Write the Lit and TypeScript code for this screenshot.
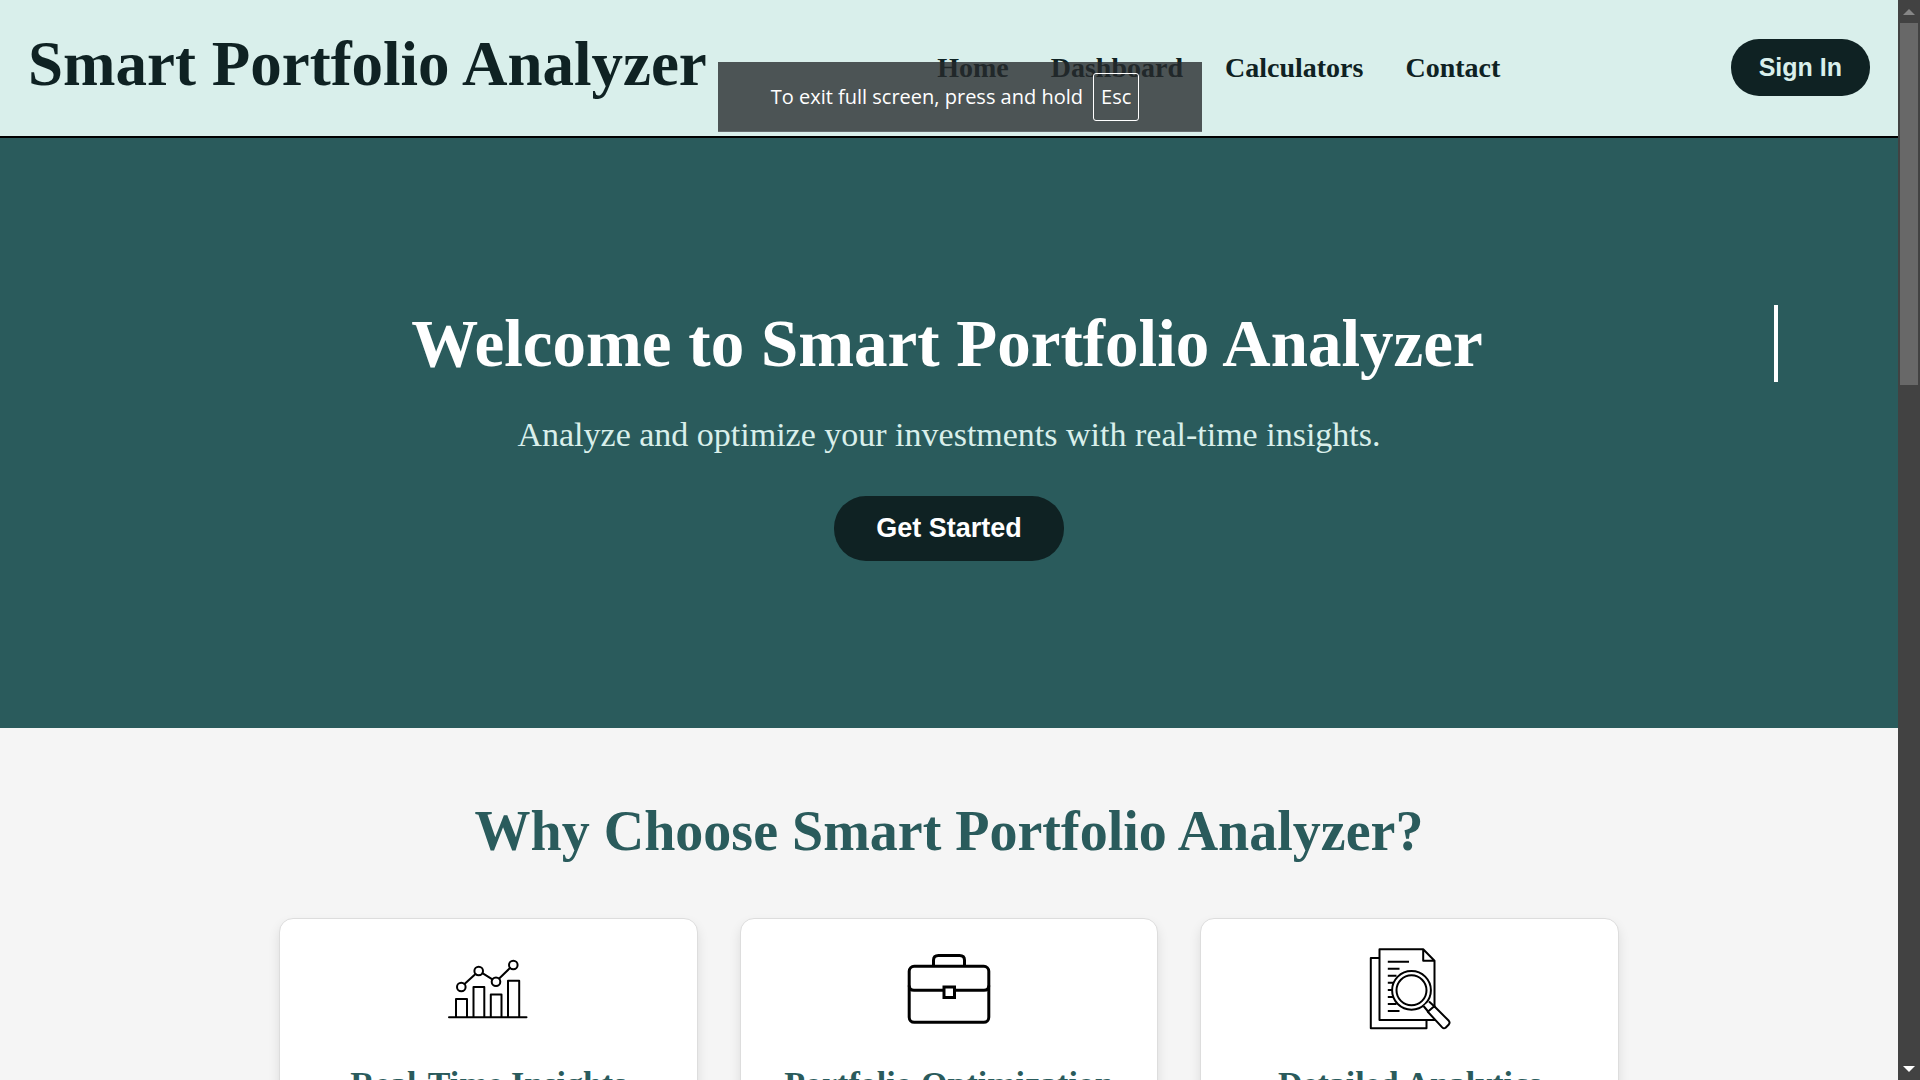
import { LitElement, html, css, svg } from "lit";
import { customElement } from "lit/decorators.js";

const chartIcon = svg`
  <g fill="none" stroke="#000" stroke-width="2" stroke-linecap="round" stroke-linejoin="round">
    <path d="M3 70.3H80.5M10 70V52H21V70M27.5 70V40H38.3V70M44.8 70V47.5H55.5V70M62 70V33.8H73.2V70"/>
    <path d="M18.5 37L29.5 27M36.4 26.2L46.4 32.4M53.2 31.5L64 21"/>
    <circle cx="15.3" cy="40" r="4.3"/>
    <circle cx="32.7" cy="24" r="4.3"/>
    <circle cx="50" cy="34.7" r="4.3"/>
    <circle cx="67.3" cy="18" r="4.3"/>
  </g>`;

const briefcaseIcon = svg`
  <g fill="none" stroke="#000" stroke-width="3">
    <rect x="2.2" y="19.3" width="79.6" height="56" rx="5"/>
    <path d="M26.5 19V13.3Q26.5 8.5 31.5 8.5H52.5Q57.5 8.5 57.5 13.3V19"/>
    <path d="M2.2 38.5Q2.2 43.3 7 43.3H77Q81.8 43.3 81.8 38.5"/>
    <rect x="37" y="40" width="10.5" height="10.5" fill="#fff"/>
  </g>`;

const documentIcon = svg`
  <g fill="none" stroke="#000" stroke-width="2" stroke-linejoin="round">
    <path d="M11.5 11H2.8V81.3H58.5V73"/>
    <path d="M66.5 60V13.7L55.2 2.3H11.5V73H67M55.2 2.3V13.7H66.5"/>
    <path d="M19.8 14.7H41M19.8 21.7H31.5M19.8 28.7H28.5M19.8 35.7H26M19.8 43H25M19.8 50H26M19.8 57H28.5M19.8 64H31.5"/>
    <circle cx="43.5" cy="43.3" r="19.4" fill="#fff"/>
    <circle cx="43.5" cy="43.3" r="15"/>
    <path d="M55.5 59L60.5 65L66.5 59.5L61 54.5" fill="#fff"/>
    <path d="M59.8 64.8L66.3 59.2L80.8 73.8Q82.3 75.6 80.8 77.5L77.6 80.7Q75.8 82 74.2 80.4Z" fill="#fff"/>
  </g>`;

const features = [
  { title: "Real-Time Insights", icon: chartIcon },
  { title: "Portfolio Optimization", icon: briefcaseIcon },
  { title: "Detailed Analytics", icon: documentIcon },
];

const links = ["Home", "Dashboard", "Calculators", "Contact"];

@customElement("app-root")
export class AppRoot extends LitElement {
  static styles = css`
    :host {
      display: flex;
      height: 100vh;
      overflow: hidden;
      position: relative;
      font-family: "Liberation Serif", "Times New Roman", serif;
      background: #f5f5f5;
    }
    * {
      box-sizing: border-box;
    }
    h1, h2, h3, p {
      margin: 0;
    }
    .page {
      flex: 1;
      min-width: 0;
    }
    .header {
      display: flex;
      align-items: center;
      justify-content: space-between;
      padding: 28px 28px 29px;
      background: #d9efeb;
      border-bottom: 2px solid #000;
      color: #0f2223;
    }
    .brand {
      font-size: 63px;
      line-height: 72px;
      padding-bottom: 7px;
    }
    .nav {
      display: flex;
      gap: 42px;
    }
    .link {
      font-size: 28px;
      line-height: 32px;
      font-weight: bold;
      color: inherit;
      text-decoration: none;
    }
    .button {
      border: 0;
      font-family: "Liberation Sans", Arial, sans-serif;
      font-weight: bold;
      background: #0f2223;
      cursor: pointer;
    }
    .sign-in {
      padding: 14px 28px;
      border-radius: 28px;
      font-size: 25px;
      line-height: 29px;
      color: #d9efeb;
    }
    .hero {
      display: flex;
      flex-direction: column;
      align-items: center;
      padding: 167px 120px;
      background: #2a5b5c;
      text-align: center;
    }
    .welcome {
      align-self: stretch;
      border-right: 4px solid #fff;
      font-size: 67px;
      line-height: 77px;
      color: #fff;
    }
    .tagline {
      margin: 34px 0 42px;
      font-size: 34px;
      line-height: 38px;
      color: #d9efeb;
    }
    .start {
      padding: 17px 42px;
      border-radius: 32px;
      font-size: 27px;
      line-height: 31px;
      color: #fff;
    }
    .features {
      padding: 71px 28px;
      color: #2a5b5c;
      text-align: center;
    }
    .heading {
      font-size: 56px;
      line-height: 64px;
    }
    .cards {
      display: grid;
      grid-template-columns: repeat(3, 1fr);
      gap: 42px;
      max-width: 1340px;
      margin: 55px auto 0;
    }
    .card {
      display: flex;
      flex-direction: column;
      align-items: center;
      gap: 34px;
      padding: 28px;
      background: #fff;
      border: 1px solid #ddd;
      border-radius: 14px;
      box-shadow: 0 6px 12px rgba(0, 0, 0, 0.1);
    }
    .icon {
      width: 84px;
      height: 84px;
    }
    .card-title {
      font-size: 34px;
      line-height: 38px;
      white-space: nowrap;
    }
    .scrollbar {
      display: flex;
      flex-direction: column;
      align-items: center;
      width: 22px;
      background: #424242;
    }
    .arrow {
      display: block;
      width: 12px;
      height: 23px;
    }
    .track {
      flex: 1;
      width: 18px;
    }
    .thumb {
      height: 35%;
      background: #686868;
    }
    .notice {
      position: absolute;
      top: 62px;
      left: 50%;
      transform: translateX(-50%);
      display: flex;
      align-items: center;
      justify-content: center;
      gap: 10px;
      width: 484px;
      height: 70px;
      padding-right: 10px;
      background: rgba(38, 42, 45, 0.79);
      border-bottom: 1px solid rgba(120, 124, 126, 0.6);
      font-family: "Open Sans", "Noto Sans", sans-serif;
      font-size: 20px;
      line-height: 28px;
      color: #fff;
      white-space: nowrap;
    }
    .key {
      padding: 9px 7px;
      border: 1px solid #fff;
      border-radius: 3px;
      font: inherit;
    }
  `;

  render() {
    return html`
      <div class="page">
        <header class="header">
          <h1 class="brand">Smart Portfolio Analyzer</h1>
          <nav class="nav">
            ${links.map((name) => html`<a class="link" href="#${name.toLowerCase()}">${name}</a>`)}
          </nav>
          <button class="button sign-in">Sign In</button>
        </header>
        <main>
          <section class="hero">
            <h1 class="welcome">Welcome to Smart Portfolio Analyzer</h1>
            <p class="tagline">Analyze and optimize your investments with real-time insights.</p>
            <button class="button start">Get Started</button>
          </section>
          <section class="features">
            <h2 class="heading">Why Choose Smart Portfolio Analyzer?</h2>
            <div class="cards">
              ${features.map(
                (item) => html`
                  <article class="card">
                    <svg class="icon" viewBox="0 0 84 84" aria-hidden="true">${item.icon}</svg>
                    <h3 class="card-title">${item.title}</h3>
                  </article>
                `
              )}
            </div>
          </section>
        </main>
      </div>
      <div class="scrollbar" aria-hidden="true">
        <svg class="arrow" viewBox="0 0 12 23"><path d="M6 9L12 15H0Z" fill="#868686"/></svg>
        <div class="track"><div class="thumb"></div></div>
        <svg class="arrow" viewBox="0 0 12 23"><path d="M0 9H12L6 15Z" fill="#fff"/></svg>
      </div>
      <div class="notice" role="status">
        <span>To exit full screen, press and hold</span>
        <kbd class="key">Esc</kbd>
      </div>
    `;
  }
}
